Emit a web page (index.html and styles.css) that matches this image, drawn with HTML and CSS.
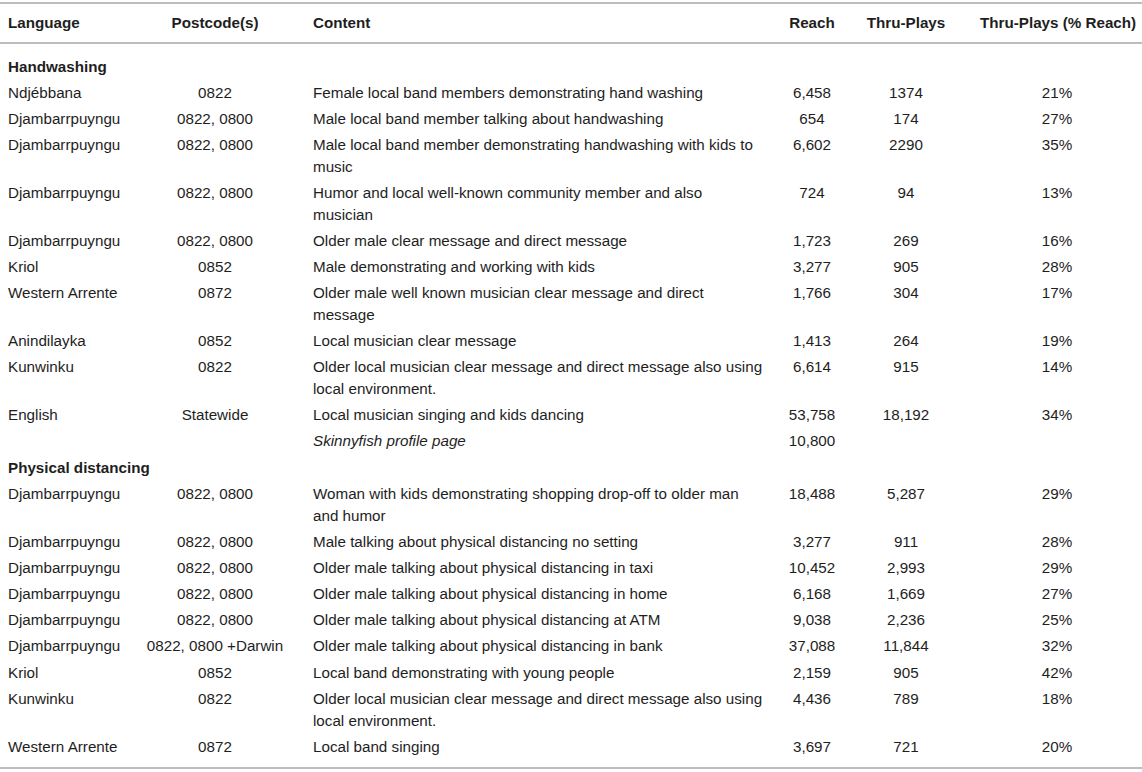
FILE: index.html
```html
<!DOCTYPE html>
<html>
<head>
<meta charset="utf-8">
<link rel="stylesheet" href="styles.css">
</head>
<body>
<table class="data">
<colgroup>
<col class="c-lang"><col class="c-post"><col class="c-content"><col class="c-reach"><col class="c-thru"><col class="c-pct">
</colgroup>
<thead>
<tr>
<th class="left">Language</th>
<th>Postcode(s)</th>
<th class="left">Content</th>
<th>Reach</th>
<th>Thru-Plays</th>
<th class="pct">Thru-Plays (% Reach)</th>
</tr>
</thead>
<tbody>
<tr class="section first"><td colspan="6">Handwashing</td></tr>
<tr><td>Ndjébbana</td><td class="c">0822</td><td>Female local band members demonstrating hand washing</td><td class="c">6,458</td><td class="c">1374</td><td class="c pct">21%</td></tr>
<tr><td>Djambarrpuyngu</td><td class="c">0822, 0800</td><td>Male local band member talking about handwashing</td><td class="c">654</td><td class="c">174</td><td class="c pct">27%</td></tr>
<tr><td>Djambarrpuyngu</td><td class="c">0822, 0800</td><td>Male local band member demonstrating handwashing with kids to music</td><td class="c">6,602</td><td class="c">2290</td><td class="c pct">35%</td></tr>
<tr><td>Djambarrpuyngu</td><td class="c">0822, 0800</td><td>Humor and local well-known community member and also musician</td><td class="c">724</td><td class="c">94</td><td class="c pct">13%</td></tr>
<tr><td>Djambarrpuyngu</td><td class="c">0822, 0800</td><td>Older male clear message and direct message</td><td class="c">1,723</td><td class="c">269</td><td class="c pct">16%</td></tr>
<tr><td>Kriol</td><td class="c">0852</td><td>Male demonstrating and working with kids</td><td class="c">3,277</td><td class="c">905</td><td class="c pct">28%</td></tr>
<tr><td>Western Arrente</td><td class="c">0872</td><td>Older male well known musician clear message and direct message</td><td class="c">1,766</td><td class="c">304</td><td class="c pct">17%</td></tr>
<tr><td>Anindilayka</td><td class="c">0852</td><td>Local musician clear message</td><td class="c">1,413</td><td class="c">264</td><td class="c pct">19%</td></tr>
<tr><td>Kunwinku</td><td class="c">0822</td><td>Older local musician clear message and direct message also using local environment.</td><td class="c">6,614</td><td class="c">915</td><td class="c pct">14%</td></tr>
<tr><td>English</td><td class="c">Statewide</td><td>Local musician singing and kids dancing</td><td class="c">53,758</td><td class="c">18,192</td><td class="c pct">34%</td></tr>
<tr><td></td><td></td><td class="it">Skinnyfish profile page</td><td class="c">10,800</td><td></td><td></td></tr>
<tr class="section second"><td colspan="6">Physical distancing</td></tr>
<tr><td>Djambarrpuyngu</td><td class="c">0822, 0800</td><td>Woman with kids demonstrating shopping drop-off to older man and humor</td><td class="c">18,488</td><td class="c">5,287</td><td class="c pct">29%</td></tr>
<tr><td>Djambarrpuyngu</td><td class="c">0822, 0800</td><td>Male talking about physical distancing no setting</td><td class="c">3,277</td><td class="c">911</td><td class="c pct">28%</td></tr>
<tr><td>Djambarrpuyngu</td><td class="c">0822, 0800</td><td>Older male talking about physical distancing in taxi</td><td class="c">10,452</td><td class="c">2,993</td><td class="c pct">29%</td></tr>
<tr><td>Djambarrpuyngu</td><td class="c">0822, 0800</td><td>Older male talking about physical distancing in home</td><td class="c">6,168</td><td class="c">1,669</td><td class="c pct">27%</td></tr>
<tr><td>Djambarrpuyngu</td><td class="c">0822, 0800</td><td>Older male talking about physical distancing at ATM</td><td class="c">9,038</td><td class="c">2,236</td><td class="c pct">25%</td></tr>
<tr><td>Djambarrpuyngu</td><td class="c">0822, 0800 +Darwin</td><td>Older male talking about physical distancing in bank</td><td class="c">37,088</td><td class="c">11,844</td><td class="c pct">32%</td></tr>
<tr class="bump"><td>Kriol</td><td class="c">0852</td><td>Local band demonstrating with young people</td><td class="c">2,159</td><td class="c">905</td><td class="c pct">42%</td></tr>
<tr><td>Kunwinku</td><td class="c">0822</td><td>Older local musician clear message and direct message also using local environment.</td><td class="c">4,436</td><td class="c">789</td><td class="c pct">18%</td></tr>
<tr class="last"><td>Western Arrente</td><td class="c">0872</td><td>Local band singing</td><td class="c">3,697</td><td class="c">721</td><td class="c pct">20%</td></tr>
</tbody>
</table>
</body>
</html>
```

FILE: styles.css
```css
html, body {
  margin: 0;
  padding: 0;
  background: #ffffff;
}
body {
  padding-top: 2px;
  font-family: "Liberation Sans", Arial, sans-serif;
  font-size: 15.2px;
  color: #1e1e1e;
}
.data {
  width: 1142px;
  border-collapse: collapse;
  table-layout: fixed;
}
.c-lang { width: 145px; }
.c-post { width: 140px; }
.c-content { width: 485px; }
.c-reach { width: 84px; }
.c-thru { width: 104px; }
.c-pct { width: 184px; }
.data thead tr {
  border-top: 2px solid #bdbdbd;
  border-bottom: 2px solid #bdbdbd;
}
.data th {
  font-weight: bold;
  text-align: center;
  line-height: 22px;
  padding: 8px 8px;
  white-space: nowrap;
}
.data th.left { text-align: left; }
.data th:nth-child(2) { padding: 8px 0; }
.data th:nth-child(3) { padding-left: 28px; }
.data td {
  line-height: 22px;
  padding: 2px 8px;
  vertical-align: top;
  text-align: left;
}
.data td:first-child {
  padding-right: 0;
  white-space: nowrap;
}
.data td:nth-child(2) {
  padding-left: 0;
  padding-right: 0;
  white-space: nowrap;
}
.data td:nth-child(3) {
  padding-left: 28px;
  padding-right: 5px;
}
.data tr.section td {
  font-weight: bold;
  padding-left: 8px;
}
.data td.c { text-align: center; }
.data .pct { padding-left: 22px; padding-right: 8px; }
.data td.it { font-style: italic; }
.data tr.first td { padding-top: 12px; }
.data tr.second td { padding-top: 3px; }
.data tr.bump td { padding-top: 3px; }
.data tr.last { border-bottom: 2px solid #bdbdbd; }
.data tr.last td { padding-bottom: 9px; }
```
